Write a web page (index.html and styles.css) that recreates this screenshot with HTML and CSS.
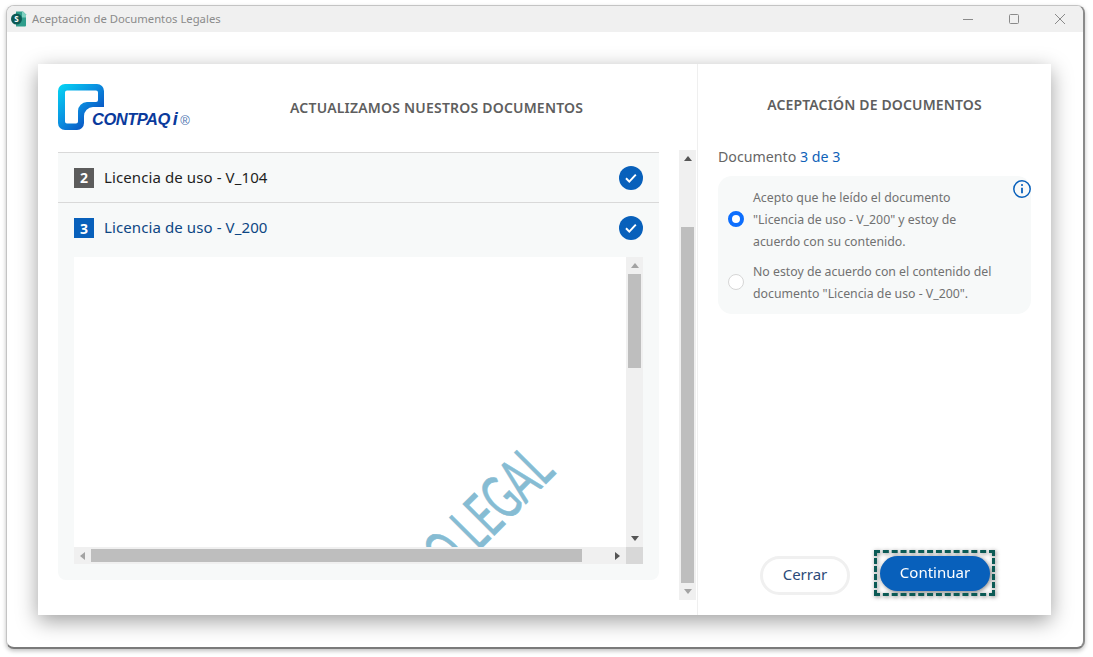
FILE: index.html
```html
<!DOCTYPE html>
<html lang="es">
<head>
<meta charset="utf-8">
<title>Aceptación de Documentos Legales</title>
<link rel="stylesheet" href="styles.css">
</head>
<body>
<div class="window">
  <header class="titlebar">
    <svg class="app-icon" width="18" height="18" viewBox="0 0 18 18">
      <path d="M6 1.500h7l3 3v11a1 1 0 0 1-1 1H6z" fill="#2f9e8c"/>
      <path d="M12 1.500h1l3 3v3h-4z" fill="#7fd0c0"/>
      <circle cx="6.500" cy="9" r="5.500" fill="#0c5a55"/>
      <text x="6.500" y="12" class="app-icon-s">S</text>
    </svg>
    <span class="window-title">Aceptación de Documentos Legales</span>
    <div class="window-controls">
      <svg width="46" height="12" viewBox="0 0 12 12"><path d="M1 6.500h10" stroke="#8a8a8a" fill="none"/></svg>
      <svg width="46" height="12" viewBox="0 0 12 12"><rect x="1.500" y="1.500" width="9" height="9" rx="1" stroke="#8a8a8a" fill="none"/></svg>
      <svg width="46" height="12" viewBox="0 0 12 12"><path d="M1 1l10 10M11 1L1 11" stroke="#8a8a8a" fill="none"/></svg>
    </div>
  </header>
  <main class="client">
    <div class="card">
      <section class="left">
        <div class="left-content">
          <div class="left-head">
            <div class="logo">
              <svg class="logo-mark" width="46" height="46" viewBox="0 0 46 46">
                <defs>
                  <linearGradient id="lg" x1="0" y1="0" x2="1" y2="1">
                    <stop offset="0" stop-color="#05d8f5"/>
                    <stop offset=".45" stop-color="#0a8fe0"/>
                    <stop offset=".8" stop-color="#0a4fc0"/>
                    <stop offset="1" stop-color="#0a3ea8"/>
                  </linearGradient>
                </defs>
                <path fill-rule="evenodd" fill="url(#lg)" d="M7 0h32a7 7 0 0 1 7 7v16H35a9 9 0 0 0-9 9v7a7 7 0 0 1-7 7H7a7 7 0 0 1-7-7V7a7 7 0 0 1 7-7zM9 6.500a2 2 0 0 0-2 2v29a2 2 0 0 0 2 2h9a2 2 0 0 0 2-2V27a9 9 0 0 1 9-9h9a2 2 0 0 0 2-2V8.500a2 2 0 0 0-2-2z"/>
              </svg>
              <span class="logo-text">CONTPAQ<span class="logo-i">i</span><span class="logo-r">®</span></span>
            </div>
            <h1 class="heading left-title">ACTUALIZAMOS NUESTROS DOCUMENTOS</h1>
          </div>
          <div class="doc-list">
            <div class="doc-row">
              <span class="num num-done">2</span>
              <span class="doc-name">Licencia de uso - V_104</span>
              <svg class="check" width="24" height="24" viewBox="0 0 24 24"><circle cx="12" cy="12" r="12" fill="#0860bb"/><path d="M7 12.300l3.300 3.300 6.500-7" stroke="#fff" stroke-width="2" fill="none"/></svg>
            </div>
            <div class="doc-row doc-row-active">
              <span class="num num-active">3</span>
              <span class="doc-name doc-name-active">Licencia de uso - V_200</span>
              <svg class="check" width="24" height="24" viewBox="0 0 24 24"><circle cx="12" cy="12" r="12" fill="#0860bb"/><path d="M7 12.300l3.300 3.300 6.500-7" stroke="#fff" stroke-width="2" fill="none"/></svg>
            </div>
            <div class="viewer">
              <div class="viewer-top">
                <div class="page"><span class="watermark">O LEGAL</span></div>
                <div class="sb-v sb-inner">
                  <span class="arrow arrow-up arrow-dim"></span>
                  <div class="track">
                    <div class="thumb thumb-inner-v"></div>
                  </div>
                  <span class="arrow arrow-down"></span>
                </div>
              </div>
              <div class="sb-h">
                <span class="arrow arrow-left arrow-dim"></span>
                <div class="thumb thumb-h"></div>
                <span class="arrow arrow-right"></span>
                <div class="corner"></div>
              </div>
            </div>
          </div>
        </div>
        <div class="sb-v sb-outer">
          <span class="arrow arrow-up"></span>
          <div class="track">
            <div class="thumb thumb-outer-v"></div>
          </div>
          <span class="arrow arrow-down arrow-dim"></span>
        </div>
      </section>
      <section class="right">
        <h2 class="heading right-title">ACEPTACIÓN DE DOCUMENTOS</h2>
        <p class="doc-count">Documento <span class="doc-count-num">3 de 3</span></p>
        <div class="options">
          <svg class="info" width="20" height="20" viewBox="0 0 20 20"><circle cx="10" cy="10" r="8.200" stroke="#0860bb" stroke-width="1.500" fill="none"/><path d="M10 8.800v5.400" stroke="#0860bb" stroke-width="1.800"/><circle cx="10" cy="6" r="1.100" fill="#0860bb"/></svg>
          <div class="option">
            <span class="radio radio-on"></span>
            <span class="option-text">Acepto que he leído el documento "Licencia de uso - V_200" y estoy de acuerdo con su contenido.</span>
          </div>
          <div class="option">
            <span class="radio"></span>
            <span class="option-text">No estoy de acuerdo con el contenido del documento "Licencia de uso - V_200".</span>
          </div>
        </div>
        <div class="actions">
          <button class="btn btn-close" type="button">Cerrar</button>
          <div class="focus-ring"><button class="btn btn-primary" type="button">Continuar</button></div>
        </div>
      </section>
    </div>
  </main>
</div>
</body>
</html>
```

FILE: styles.css
```css
* { box-sizing: border-box; }
html, body { margin: 0; height: 100%; }
body {
  background: #fff;
  padding: 5px 8px 8px 6px;
  font-family: "Noto Sans", "Open Sans", sans-serif;
  overflow: hidden;
}
.window {
  height: 644px;
  display: flex;
  flex-direction: column;
  background: #fff;
  border: 1px solid #c4c4c4;
  border-right: 2px solid #8a8a8a;
  border-bottom: 2px solid #7a7a7a;
  border-radius: 8px;
  box-shadow: 0 2px 4px rgba(0,0,0,.25);
  overflow: hidden;
}
.titlebar {
  height: 26px;
  flex: none;
  display: flex;
  align-items: center;
  background: #f0f0f0;
  padding-left: 3px;
}
.app-icon { flex: none; }
.app-icon-s { font: 700 8px "Noto Sans", sans-serif; fill: #fff; text-anchor: middle; }
.window-title { margin: -2px 0 0 4px; font-size: 11.300px; color: #8b8b8b; }
.window-controls { margin-left: auto; display: flex; }
.window-controls svg { display: block; }
.client { flex: 1; min-height: 0; padding: 32px 32px 32px 31px; }
.card {
  height: 100%;
  display: flex;
  background: #fff;
  box-shadow: 0 6px 20px rgba(0,0,0,.38);
}
.left {
  width: 660px;
  flex: none;
  display: flex;
  border-right: 1px solid #efefef;
  padding-left: 20px;
}
.left-content { width: 601px; flex: none; display: flex; flex-direction: column; }
.left-head { height: 88px; flex: none; display: flex; align-items: flex-start; padding-top: 20px; }
.logo { width: 232px; flex: none; display: flex; align-items: flex-end; height: 46px; position: relative; }
.logo-mark { display: block; }
.logo-text {
  position: absolute;
  left: 33px;
  top: 26px;
  padding: 0 1px;
  background: #fff;
  font: italic 700 16.500px/18px "Liberation Sans", sans-serif;
  color: #0a3a9c;
  white-space: nowrap;
  letter-spacing: -.5px;
}
.logo-i { margin-left: 3px; color: #0a3a9c; font-weight: 700; font-size: 18px; }
.logo-r { margin-left: 3px; font: 400 13px "Liberation Sans", sans-serif; color: #4a72b0; }
.heading {
  margin: 0;
  font-size: 14px;
  font-weight: 600;
  color: #5e5e5e;
}
.left-title { padding-top: 14px; white-space: nowrap; letter-spacing: .2px; }
.doc-list {
  height: 428px;
  flex: none;
  display: flex;
  flex-direction: column;
  background: #f7f9f9;
  border-top: 1px solid #d9d9d9;
  border-radius: 0 0 8px 8px;
}
.doc-row {
  height: 50px;
  flex: none;
  display: flex;
  align-items: center;
  padding: 0 16px;
  border-bottom: 1px solid #d9d9d9;
}
.doc-row-active { border-bottom: 0; }
.num {
  width: 20px; height: 20px;
  flex: none;
  display: flex; align-items: center; justify-content: center;
  font-size: 14px; font-weight: 700; color: #fff;
}
.num-done { background: #5c5c5c; }
.num-active { background: #0860bb; }
.doc-name { margin: -2px 0 0 10px; font-size: 15px; font-weight: 400; letter-spacing: .1px; color: #1e1e1e; }
.doc-name-active { color: #0d4683; }
.check { margin-left: auto; flex: none; }
.viewer { margin: 4px 16px 0; height: 307px; flex: none; display: flex; flex-direction: column; }
.viewer-top { flex: 1; min-height: 0; display: flex; }
.page { flex: 1; background: #fff; position: relative; overflow: hidden; }
.watermark {
  position: absolute;
  right: 108px;
  top: 177px;
  font: 400 62px/1 "Lato", "Open Sans", sans-serif;
  -webkit-text-stroke: .7px #86bcd3;
  color: #86bcd3;
  white-space: nowrap;
  transform: rotate(-45deg) scaleX(.6);
  transform-origin: 100% 0;
}
.sb-v {
  width: 17px;
  flex: none;
  display: flex;
  flex-direction: column;
  align-items: center;
  background: #f0f0f0;
}
.sb-outer { margin: 86px 0 0 20px; height: 450px; }
.track { flex: 1; width: 100%; min-height: 0; padding: 0 2px; }
.thumb { background: #bebebe; }
.thumb-inner-v { height: 94px; }
.thumb-outer-v { height: 356px; margin-top: 60px; }
.arrow { display: block; width: 0; height: 0; flex: none; }
.arrow-up { margin: 6px 0; border: 4px solid transparent; border-top: 0; border-bottom: 5px solid #555; }
.arrow-down { margin: 6px 0; border: 4px solid transparent; border-bottom: 0; border-top: 5px solid #555; }
.arrow-dim { opacity: .5; }
.sb-h { height: 17px; flex: none; display: flex; align-items: center; background: #f0f0f0; }
.arrow-left { margin: 0 6px 0 6px; border: 4px solid transparent; border-left: 0; border-right: 5px solid #555; }
.arrow-right { margin: 0 6px 0 auto; border: 4px solid transparent; border-right: 0; border-left: 5px solid #555; }
.thumb-h { width: 491px; height: 13px; }
.corner { width: 17px; height: 17px; background: #d8d8d8; flex: none; }
.right {
  flex: 1;
  min-width: 0;
  display: flex;
  flex-direction: column;
  padding: 0 20px 19px;
}
.right-title { margin-top: 31px; text-align: center; line-height: 20px; white-space: nowrap; letter-spacing: .15px; }
.doc-count { margin: 32px 0 0; font-size: 14.200px; line-height: 20px; color: #666; }
.doc-count-num { color: #0f62b8; }
.options {
  position: relative;
  margin-top: 9px;
  height: 138px;
  background: #f7f9f9;
  border-radius: 14px;
  padding: 11px 35px 0 10px;
}
.info { position: absolute; top: 3px; right: -1px; }
.option { display: flex; align-items: center; margin-bottom: 8px; }
.radio {
  width: 16px; height: 16px;
  flex: none;
  border-radius: 50%;
  background: #fff;
  border: 1px solid #d6d6d6;
  margin-top: -2px;
}
.radio-on { border: 4.500px solid #0d6efd; }
.option-text {
  margin-left: 9px;
  font-size: 12.300px;
  line-height: 22px;
  color: #717171;
}
.actions {
  margin-top: auto;
  display: flex;
  align-items: flex-start;
  justify-content: flex-end;
  padding-right: 36px;
}
.btn {
  font-family: inherit;
  font-size: 15px;
  line-height: 1;
  padding: 0 0 2px;
  cursor: pointer;
  border-radius: 20px;
  display: block;
}
.btn-close {
  width: 90px; height: 39px;
  margin: 6px 24px 0 0;
  background: #fff;
  border: 3px solid #f0f0f0;
  color: #2c4a78;
}
.focus-ring {
  padding: 3px 2px 2px 3px;
  border: 3px dashed #0b5a55;
  filter: drop-shadow(1px 1px 2px rgba(0,0,0,.5));
}
.btn-primary {
  width: 110px; height: 35px;
  background: #0860bb;
  border: 0;
  color: #fff;
}
```
